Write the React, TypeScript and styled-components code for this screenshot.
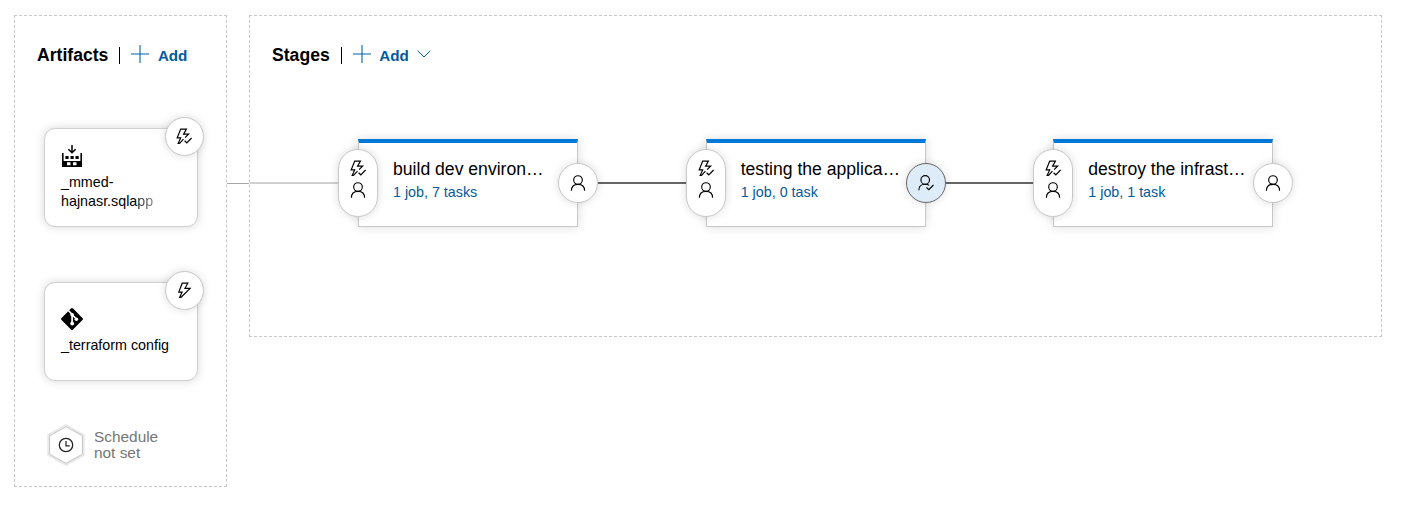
import React from "react";
import styled, { createGlobalStyle } from "styled-components";

const GlobalStyle = createGlobalStyle`
  * { box-sizing: border-box; }
  body {
    margin: 0;
    background: #fff;
    color: #000;
    font-family: "Liberation Sans", Arial, sans-serif;
  }
`;

const Pipeline = styled.main`
  display: flex;
  align-items: flex-start;
  width: 1402px;
  height: 505px;
  padding: 15px 0 0 14px;
  overflow: hidden;
`;

const Panel = styled.section<{ $width: number; $height: number }>`
  flex: none;
  width: ${(p) => p.$width}px;
  height: ${(p) => p.$height}px;
  border: 1px dashed #c8c8c8;
`;

const PanelHeader = styled.header`
  display: flex;
  align-items: center;
  height: 24px;
  margin: 27px 0 0 22px;
`;

const PanelTitle = styled.h2`
  margin: 0;
  font-size: 17.6px;
  line-height: 24px;
  font-weight: bold;
`;

const Divider = styled.span`
  width: 1px;
  height: 17px;
  margin: 1px 11px 0;
  background: #000;
`;

const AddButton = styled.button`
  display: flex;
  align-items: center;
  padding: 0;
  border: 0;
  background: none;
  color: #005a9e;
  font: bold 15.2px/20px "Liberation Sans", Arial, sans-serif;

  svg { display: block; margin-bottom: 2px; }
  span { margin: 2px 8.5px 0; }
`;

const ArtifactList = styled.div`
  display: flex;
  flex-direction: column;
  gap: 55px;
  margin: 61px 0 0 29px;
`;

const ArtifactCard = styled.article<{ $top: number }>`
  position: relative;
  width: 154px;
  height: 99px;
  padding: ${(p) => p.$top}px 15px 0 16px;
  border: 1px solid #d0d0d0;
  border-radius: 11px;
  background: #fff;
  box-shadow: 0 0 10px rgba(0, 0, 0, 0.16);

  > svg { display: block; }
`;

const ArtifactName = styled.div`
  margin-top: 6px;
  font-size: 14.3px;
  line-height: 19px;
  white-space: nowrap;
`;

const FadedEnd = styled.span`
  background: linear-gradient(90deg, #222, #888);
  background-clip: text;
  color: transparent;
`;

const TriggerBadge = styled.div`
  position: absolute;
  top: -12px;
  right: -7px;
  display: flex;
  align-items: center;
  justify-content: center;
  width: 39px;
  height: 39px;
  padding: 0 1px 1px 0;
  border: 1px solid #c8c8c8;
  border-radius: 50%;
  background: #fff;
  box-shadow: 0 0 8px rgba(0, 0, 0, 0.14);
`;

const Schedule = styled.div`
  display: flex;
  align-items: center;
  gap: 9px;
  margin: 43px 0 0 32px;
  color: #767676;
  font-size: 15.4px;
  line-height: 16px;
`;

const PanelLink = styled.div`
  flex: none;
  width: 22px;
  height: 1px;
  margin-top: 168px;
  background: #a6a6a6;
`;

const StageRow = styled.div`
  display: flex;
  align-items: center;
  margin-top: 72px;
`;

const StageLink = styled.div<{ $color: string; $width: number }>`
  flex: none;
  width: ${(p) => p.$width}px;
  height: 2px;
  background: ${(p) => p.$color};
`;

const StageNode = styled.article`
  display: flex;
  flex: none;
  align-items: center;
`;

const StageCard = styled.div`
  width: 220px;
  height: 88px;
  margin: 0 -20px;
  padding: 15px 20px 0 34px;
  border: 1px solid #c8c8c8;
  border-top: 4px solid #0078d7;
  background: #fff;
  box-shadow: 0 0 10px rgba(0, 0, 0, 0.14);
`;

const StageTitle = styled.div`
  font-size: 17.6px;
  line-height: 22px;
  white-space: nowrap;
`;

const StageTasks = styled.div`
  margin-top: 3px;
  color: #005a9e;
  font-size: 14.3px;
  line-height: 18px;
`;

const Conditions = styled.div<{ $tall?: boolean; $active?: boolean }>`
  z-index: 1;
  display: flex;
  flex: none;
  flex-direction: column;
  align-items: center;
  justify-content: ${(p) => (p.$tall ? "flex-start" : "center")};
  gap: 6px;
  width: 40px;
  height: ${(p) => (p.$tall ? 68 : 40)}px;
  padding-top: ${(p) => (p.$tall ? 10 : 0)}px;
  border: 1px solid ${(p) => (p.$active ? "#666" : "#c8c8c8")};
  border-radius: 20px;
  background: ${(p) => (p.$active ? "#deecf9" : "#fff")};
  box-shadow: 0 0 8px rgba(0, 0, 0, 0.14);
`;

const PlusIcon = () => (
  <svg width="18" height="18" viewBox="0 0 18 18" fill="none" stroke="#0063b1" strokeWidth="1.1">
    <path d="M9 0v18M0 9h18" />
  </svg>
);

const ChevronIcon = () => (
  <svg width="14" height="8" viewBox="0 0 14 8" fill="none" stroke="#005a9e">
    <path d="M.7.8 7 7 13.3.8" />
  </svg>
);

const BoltIcon = () => (
  <svg width="16" height="16" viewBox="0 0 16 16" fill="none" stroke="#000" strokeWidth="1.2">
    <path d="M6.2 1.2h5.6L9 6.3h5.1L4.9 15.500H3.600l2.500-5.400H2.800z" />
  </svg>
);

const BoltCheckIcon = () => (
  <svg width="16" height="16" viewBox="0 0 16 16" fill="none" stroke="#000" strokeWidth="1.2">
    <path d="M7.500 11.200 3.500 15.300H2.200l2.500-5.400H1.200L4.700 1.100h5.700L7.600 6.200h5L9.100 9.600" />
    <path d="m8.600 12.700 2.200 2.100 4.800-4.800" />
  </svg>
);

const PersonIcon = () => (
  <svg width="16" height="16" viewBox="0 0 16 16" fill="none" stroke="#000" strokeWidth="1.15">
    <circle cx="8" cy="5" r="4.3" />
    <path d="M1.400 15.800C1.400 11.600 4.100 9.300 8 9.300s6.600 2.300 6.600 6.500" />
  </svg>
);

const PersonCheckIcon = () => (
  <svg width="16" height="16" viewBox="0 0 16 16" fill="none" stroke="#000" strokeWidth="1.15">
    <circle cx="7.2" cy="4.9" r="4.3" />
    <path d="M.8 15.200C.8 11.500 3.300 9.200 7.200 9.200c1.600 0 2.900.4 4 1.200" />
    <path d="m8.500 12.500 2.300 2.200 4.700-4.700" />
  </svg>
);

const BuildIcon = () => (
  <svg width="22" height="22" viewBox="0 0 22 22" fill="#000">
    <path d="M1 8h1.600v8h16.800V8H21v14H1z" />
    <path d="M4.400 11h3.200v3H4.400zM9.500 11h3.200v3H9.500zM14.500 11h3.200v3h-3.200z" />
    <path d="M6 17.300h3.500v2.900H6zM12 17.300h3.500v2.900H12z" fill="#fff" />
    <path d="M11 0v7.500M7.400 4.200 11 7.800l3.600-3.600" fill="none" stroke="#000" strokeWidth="1.5" />
  </svg>
);

const GitIcon = () => (
  <svg width="22" height="22" viewBox="0 0 22 22">
    <path d="M9.900.6a1.500 1.500 0 0 1 2.200 0l9.300 9.300a1.500 1.500 0 0 1 0 2.200l-9.300 9.300a1.500 1.500 0 0 1-2.200 0L.6 12.100a1.500 1.500 0 0 1 0-2.200z" />
    <path d="m7.400 2.500 3.700 3.900v9M11.100 6.500l4.200 4.500" fill="none" stroke="#fff" strokeWidth="1.7" />
    <g fill="#fff">
      <circle cx="11.1" cy="6.8" r="1.8" />
      <circle cx="11.2" cy="15.5" r="1.9" />
      <circle cx="15.4" cy="11.2" r="1.8" />
    </g>
  </svg>
);

const ScheduleIcon = () => (
  <svg width="38" height="42" viewBox="0 0 38 42" fill="none">
    <path d="M19 1.300 36.500 11.200v19.600L19 40.700 1.500 30.800V11.200z" fill="#fff" stroke="#e8e8e8" strokeWidth="2.4" />
    <path d="M19 2.700 35.400 11.800v18.400L19 39.300 2.600 30.200V11.800z" stroke="#c8c8c8" />
    <circle cx="19" cy="21" r="6.7" stroke="#222" strokeWidth="1.3" />
    <path d="M19 17v4.800h3.700" stroke="#222" strokeWidth="1.2" />
  </svg>
);

const stages = [
  { title: "build dev environ…", tasks: "1 job, 7 tasks", approved: false, link: 88, color: "#d0d0d0" },
  { title: "testing the applica…", tasks: "1 job, 0 task", approved: true, link: 87.7, color: "#666" },
  { title: "destroy the infrast…", tasks: "1 job, 1 task", approved: false, link: 87.6, color: "#666" },
];

export default function App() {
  return (
    <>
      <GlobalStyle />
      <Pipeline>
        <Panel $width={213} $height={472}>
          <PanelHeader>
            <PanelTitle>Artifacts</PanelTitle>
            <Divider />
            <AddButton>
              <PlusIcon />
              <span>Add</span>
            </AddButton>
          </PanelHeader>
          <ArtifactList>
            <ArtifactCard $top={16}>
              <BuildIcon />
              <ArtifactName>
                _mmed-
                <br />
                hajnasr.sqla<FadedEnd>pp</FadedEnd>
              </ArtifactName>
              <TriggerBadge>
                <BoltCheckIcon />
              </TriggerBadge>
            </ArtifactCard>
            <ArtifactCard $top={25}>
              <GitIcon />
              <ArtifactName>_terraform config</ArtifactName>
              <TriggerBadge>
                <BoltIcon />
              </TriggerBadge>
            </ArtifactCard>
          </ArtifactList>
          <Schedule>
            <ScheduleIcon />
            <div>
              Schedule
              <br />
              not set
            </div>
          </Schedule>
        </Panel>
        <PanelLink />
        <Panel $width={1133} $height={322}>
          <PanelHeader>
            <PanelTitle>Stages</PanelTitle>
            <Divider />
            <AddButton>
              <PlusIcon />
              <span>Add</span>
              <ChevronIcon />
            </AddButton>
          </PanelHeader>
          <StageRow>
            {stages.map((s) => (
              <React.Fragment key={s.title}>
                <StageLink $width={s.link} $color={s.color} />
                <StageNode>
                  <Conditions $tall>
                    <BoltCheckIcon />
                    <PersonIcon />
                  </Conditions>
                  <StageCard>
                    <StageTitle>{s.title}</StageTitle>
                    <StageTasks>{s.tasks}</StageTasks>
                  </StageCard>
                  <Conditions $active={s.approved}>
                    {s.approved ? <PersonCheckIcon /> : <PersonIcon />}
                  </Conditions>
                </StageNode>
              </React.Fragment>
            ))}
          </StageRow>
        </Panel>
      </Pipeline>
    </>
  );
}
